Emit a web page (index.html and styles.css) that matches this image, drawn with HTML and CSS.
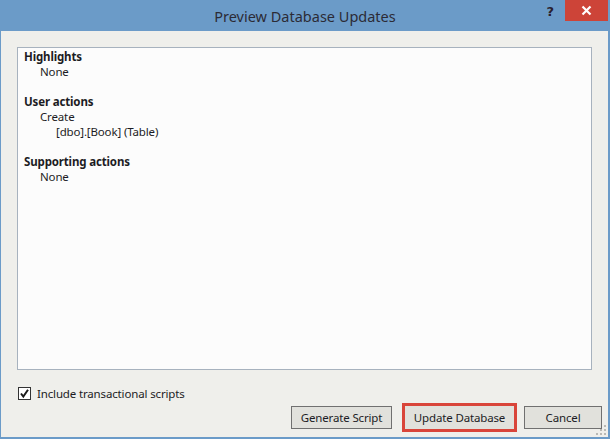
FILE: index.html
```html
<!DOCTYPE html>
<html>
<head>
<meta charset="utf-8">
<link rel="stylesheet" href="styles.css">
</head>
<body>
<div class="window">
  <div class="titlebar">
    <div class="spacer"></div>
    <div class="title">Preview Database Updates</div>
    <div class="controls">
      <span class="help">?</span>
      <span class="close">
        <svg width="11" height="11" viewBox="0 0 11 11"><path d="M1.5 1.5 L9.5 9.5 M9.5 1.5 L1.5 9.5" stroke="#fff" stroke-width="2.2" fill="none"/></svg>
      </span>
    </div>
  </div>
  <div class="content">
    <div class="panel">
      <div class="line head">Highlights</div>
      <div class="line ind1">None</div>
      <div class="line blank"></div>
      <div class="line head">User actions</div>
      <div class="line ind1">Create</div>
      <div class="line ind2">[dbo].[Book] (Table)</div>
      <div class="line blank"></div>
      <div class="line head">Supporting actions</div>
      <div class="line ind1">None</div>
    </div>
    <label class="check-row">
      <span class="checkbox">
        <svg width="11" height="11" viewBox="0 0 11 11"><path d="M2 5.5 L4.3 8.5 L9 1.8" stroke="#1a1a1a" stroke-width="2" fill="none"/></svg>
      </span>
      <span class="check-label">Include transactional scripts</span>
    </label>
    <div class="buttons">
      <button class="btn btn-generate">Generate Script</button>
      <button class="btn btn-update">Update Database</button>
      <button class="btn btn-cancel">Cancel</button>
    </div>
    <svg class="grip" width="11" height="11" viewBox="0 0 11 11">
      <rect x="8" y="0" width="2" height="2" fill="#b9b9b5"/>
      <rect x="4" y="4" width="2" height="2" fill="#b9b9b5"/>
      <rect x="8" y="4" width="2" height="2" fill="#b9b9b5"/>
      <rect x="0" y="8" width="2" height="2" fill="#b9b9b5"/>
      <rect x="4" y="8" width="2" height="2" fill="#b9b9b5"/>
      <rect x="8" y="8" width="2" height="2" fill="#b9b9b5"/>
    </svg>
  </div>
</div>
</body>
</html>
```

FILE: styles.css
```css
html, body {
  margin: 0;
  padding: 0;
}
body {
  width: 610px;
  height: 439px;
  overflow: hidden;
  background: #6b9bc8;
  font-family: "Noto Sans", "Open Sans", sans-serif;
  font-size: 11.5px;
  letter-spacing: -0.15px;
  color: #1c1c24;
}
.window {
  display: flex;
  flex-direction: column;
  height: 439px;
}
.titlebar {
  height: 31px;
  display: grid;
  grid-template-columns: 1fr auto 1fr;
  align-items: start;
}
.title {
  padding-top: 6px;
  font-size: 14.5px;
  letter-spacing: 0;
  color: #2b2b36;
  line-height: 20px;
}
.controls {
  display: flex;
  justify-content: flex-end;
  align-items: flex-start;
}
.help {
  font-family: "DejaVu Sans", sans-serif;
  font-weight: bold;
  font-size: 13px;
  line-height: 14px;
  color: #2a1f2f;
  margin-top: 5px;
  margin-right: 11px;
}
.close {
  width: 43px;
  height: 21px;
  background: #cd4438;
  display: flex;
  align-items: center;
  justify-content: center;
  margin-right: 2px;
}
.content {
  flex: 1;
  position: relative;
  margin: 0 2px 2px 1px;
  background: #efefeb;
  padding: 16px 6px 0 16px;
  display: flex;
  flex-direction: column;
}
.panel {
  height: 320px;
  margin-right: 10px;
  background: #fcfcfc;
  border: 1px solid #a7b2be;
  padding: 1px 0 0 6px;
}
.line {
  height: 15px;
  line-height: 15px;
  white-space: nowrap;
}
.head {
  font-weight: bold;
}
.ind1 {
  padding-left: 16px;
}
.ind2 {
  padding-left: 32px;
}
.check-row {
  display: flex;
  align-items: center;
  margin-top: 17px;
  margin-left: 1px;
  height: 13px;
}
.checkbox {
  width: 11px;
  height: 11px;
  border: 1px solid #333;
  background: #fff;
  display: flex;
  align-items: center;
  justify-content: center;
}
.check-label {
  margin-left: 6px;
  line-height: 13px;
}
.buttons {
  display: flex;
  justify-content: flex-end;
  gap: 10px;
  margin-top: 6px;
}
.btn {
  font-family: inherit;
  font-size: 11.5px;
  letter-spacing: -0.15px;
  color: #1c1c24;
  height: 23px;
  background: #e1e1dc;
  border: 1px solid #707070;
  padding: 0;
  margin: 0;
}
.btn-generate {
  width: 101px;
  margin-right: 3px;
}
.btn-update {
  width: 109px;
  outline: 3px solid #d9453a;
  outline-offset: 0;
  border-color: #e1e1dc;
}
.btn-cancel {
  width: 78px;
}
.grip {
  position: absolute;
  right: 1px;
  bottom: 1px;
}
```
